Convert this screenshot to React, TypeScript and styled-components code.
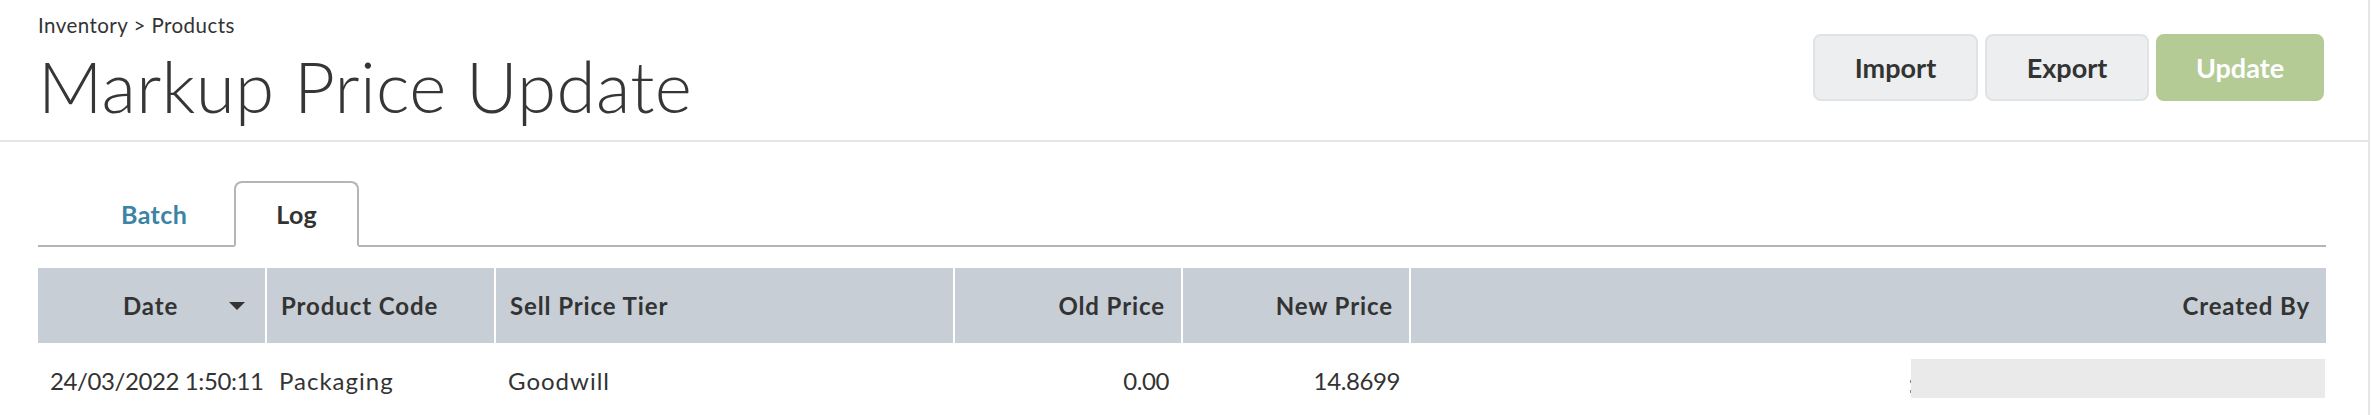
import React from "react";
import styled, { createGlobalStyle } from "styled-components";

const GlobalStyle = createGlobalStyle`
  html, body {
    margin: 0;
    padding: 0;
    background: #ffffff;
  }
  body {
    font-family: "Lato", "Open Sans", sans-serif;
    color: #333333;
  }
`;

const Page = styled.div`
  width: 2370px;
  min-height: 415px;
  border-right: 2px solid #e6e6e6;
  box-sizing: border-box;
  overflow: hidden;
`;

const TopBar = styled.header`
  display: flex;
  justify-content: space-between;
  align-items: flex-start;
  height: 140px;
  padding: 0 44px 0 38px;
  border-bottom: 2px solid #e3e7ea;
`;

const TitleBlock = styled.div`
  display: flex;
  flex-direction: column;
  padding-top: 13px;
`;

const Breadcrumb = styled.div`
  font-size: 20.5px;
  line-height: 24px;
  letter-spacing: 0.45px;
  color: #333333;
`;

const Title = styled.h1`
  margin: 9px 0 0 0;
  font-size: 71px;
  line-height: 80px;
  font-weight: 300;
  letter-spacing: 0.3px;
  color: #363636;
`;

const Actions = styled.div`
  display: flex;
  gap: 7px;
  margin-top: 34px;
`;

const Button = styled.button<{ $primary?: boolean; $w: number }>`
  width: ${(p) => p.$w}px;
  height: 67px;
  padding: 0;
  border-radius: 8px;
  border: 2px solid ${(p) => (p.$primary ? "#b4cb96" : "#dfe3e6")};
  background: ${(p) => (p.$primary ? "#b4cb96" : "#eceef0")};
  color: ${(p) => (p.$primary ? "#ffffff" : "#333333")};
  font-family: "Lato", sans-serif;
  font-weight: 700;
  font-size: 27px;
  cursor: pointer;
`;

const Content = styled.main`
  padding: 39px 42px 0 38px;
`;

const Tabs = styled.nav`
  display: flex;
  align-items: flex-end;
  gap: 6px;
  padding-left: 42px;
  border-bottom: 2px solid #b5b5b5;
`;

const Tab = styled.div<{ $active?: boolean }>`
  height: 62px;
  padding: 0 ${(p) => (p.$active ? 40 : 39)}px;
  margin-bottom: -2px;
  display: flex;
  align-items: center;
  border: 2px solid ${(p) => (p.$active ? "#b5b5b5" : "transparent")};
  border-bottom: 2px solid ${(p) => (p.$active ? "#ffffff" : "transparent")};
  border-radius: 8px 8px 0 0;
  background: ${(p) => (p.$active ? "#ffffff" : "transparent")};
  font-size: 25px;
  font-weight: 700;
  letter-spacing: 0.4px;
  color: ${(p) => (p.$active ? "#333333" : "#3b84a6")};
`;

const Table = styled.div`
  margin-top: 21px;
  display: grid;
  grid-template-columns: 227px 227px 457px 226px 226px 1fr;
  column-gap: 2px;
`;

const HeadCell = styled.div<{ $align?: "left" | "right" | "center" }>`
  position: relative;
  height: 75px;
  display: flex;
  align-items: center;
  justify-content: ${(p) =>
    p.$align === "right" ? "flex-end" : p.$align === "center" ? "center" : "flex-start"};
  padding: 0 16px 0 14px;
  background: #c7ced6;
  font-size: 24px;
  font-weight: 700;
  letter-spacing: 0.9px;
  color: #333333;
`;

const SortArrow = styled.span`
  position: absolute;
  right: 20px;
  top: 50%;
  width: 0;
  height: 0;
  margin-top: -4px;
  border-left: 8px solid transparent;
  border-right: 8px solid transparent;
  border-top: 8px solid #333333;
`;

const Cell = styled.div<{ $align?: "left" | "right"; $numeric?: boolean; $pr?: number }>`
  height: 74px;
  display: flex;
  align-items: center;
  justify-content: ${(p) => (p.$align === "right" ? "flex-end" : "flex-start")};
  padding: 0 ${(p) => p.$pr ?? 10}px 0 12px;
  font-size: 24px;
  letter-spacing: ${(p) => (p.$numeric ? "-0.4px" : "1px")};
  color: #333333;
  white-space: nowrap;
`;

const Redacted = styled.div`
  position: relative;
  width: 414px;
  height: 39px;
  margin-right: 1px;
  margin-top: -4px;
  background: #eaeaea;
  &::before,
  &::after {
    content: "";
    position: absolute;
    left: -1px;
    width: 1px;
    height: 3px;
    background: #888888;
  }
  &::before {
    top: 21px;
  }
  &::after {
    top: 31px;
  }
`;

export default function App() {
  return (
    <>
      <GlobalStyle />
      <Page>
        <TopBar>
          <TitleBlock>
            <Breadcrumb>Inventory &gt; Products</Breadcrumb>
            <Title>Markup Price Update</Title>
          </TitleBlock>
          <Actions>
            <Button $w={165}>Import</Button>
            <Button $w={164}>Export</Button>
            <Button $w={168} $primary>
              Update
            </Button>
          </Actions>
        </TopBar>
        <Content>
          <Tabs>
            <Tab>Batch</Tab>
            <Tab $active>Log</Tab>
          </Tabs>
          <Table>
            <HeadCell $align="center">
              Date
              <SortArrow />
            </HeadCell>
            <HeadCell>Product Code</HeadCell>
            <HeadCell>Sell Price Tier</HeadCell>
            <HeadCell $align="right">Old Price</HeadCell>
            <HeadCell $align="right">New Price</HeadCell>
            <HeadCell $align="right">Created By</HeadCell>

            <Cell $numeric>24/03/2022 1:50:11</Cell>
            <Cell>Packaging</Cell>
            <Cell>Goodwill</Cell>
            <Cell $align="right" $numeric $pr={12}>
              0.00
            </Cell>
            <Cell $align="right" $numeric $pr={9}>
              14.8699
            </Cell>
            <Cell $align="right" $pr={0}>
              <Redacted />
            </Cell>
          </Table>
        </Content>
      </Page>
    </>
  );
}
